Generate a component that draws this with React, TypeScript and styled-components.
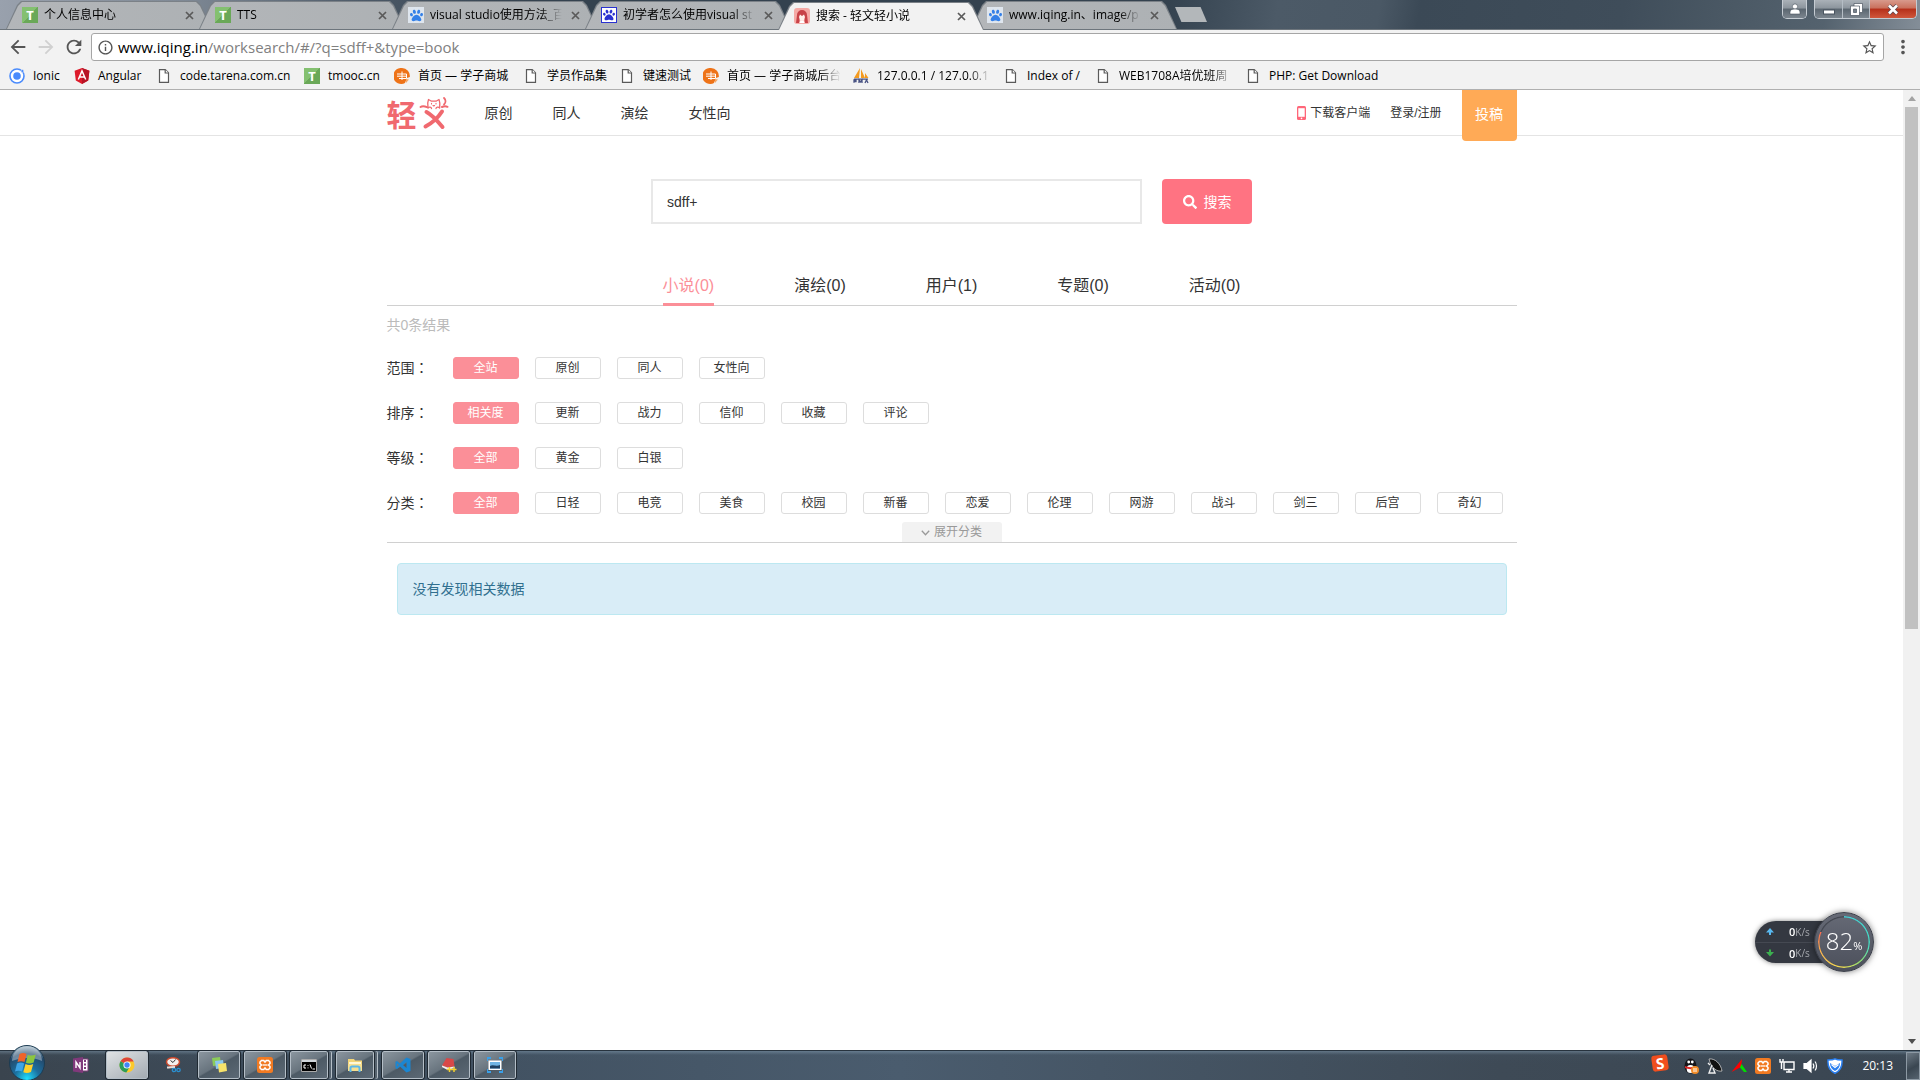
import React, { useState } from "react";
import styled, { createGlobalStyle, css } from "styled-components";
import { MdArrowBack, MdArrowForward, MdRefresh, MdStarBorder, MdInfoOutline, MdMoreVert } from "react-icons/md";
import { FaPaw, FaSearch } from "react-icons/fa";

const uiFont = `"Open Sans", "Noto Sans CJK SC", sans-serif`;
const pageFont = `"Liberation Sans", "Noto Sans CJK SC", sans-serif`;

const GlobalStyle = createGlobalStyle`
  *, *::before, *::after { box-sizing: border-box; }
  body { margin: 0; overflow: hidden; }
  button, input { font: inherit; color: inherit; margin: 0; }
  button { padding: 0; border: 0; background: none; cursor: pointer; }
  a { color: inherit; text-decoration: none; }
  svg { display: block; flex: none; }
`;

const Desktop = styled.div`
  display: flex;
  flex-direction: column;
  height: 100vh;
  background: #fff;
  font-family: ${uiFont};
  font-size: 12px;
  color: #000;
`;

/* ---------- browser tab strip ---------- */

const TabStrip = styled.header`
  display: flex;
  justify-content: space-between;
  height: 30px;
  padding: 0 3px 0 6px;
  background: linear-gradient(100deg, #99a1ad 0, #7f8995 180px, #4c5967 360px, #34424f 520px, #34424f 1150px,
    #4c5a67 1260px, #4a5865 1360px, #3b4956 1400px, #3f4d5a 1600px, #4a5864 1700px, #54626e 1800px, #86909a 1900px);
  border-bottom: 1px solid #6d757c;
`;

const Tabs = styled.nav`
  display: flex;
  align-items: flex-end;
`;

const TabBox = styled.div<{ $active?: boolean }>`
  position: relative;
  z-index: ${(p) => (p.$active ? 2 : 1)};
  display: flex;
  align-items: center;
  gap: 6px;
  width: 206px;
  height: 28px;
  margin-right: -13px;
  margin-bottom: ${(p) => (p.$active ? "-1px" : "0")};
  padding: 0 16px;
  isolation: isolate;

  &::before,
  &::after {
    content: "";
    position: absolute;
    z-index: -1;
    inset: 0;
    clip-path: polygon(0 100%, 11px 4px, 15px 0, 191px 0, 195px 4px, 100% 100%);
    background: #7b8187;
  }
  &::after {
    inset: 1px 1px 0;
    clip-path: polygon(0 100%, 11px 4px, 15px 0, 189px 0, 193px 4px, 100% 100%);
    background: ${(p) => (p.$active ? "#f2f2f2" : "linear-gradient(90deg, #b3b6b9, #adb1b4)")};
  }
`;

const fade = css`
  overflow: hidden;
  white-space: nowrap;
  mask-image: linear-gradient(90deg, #000 calc(100% - 22px), transparent);
`;

const TabTitle = styled.a`
  ${fade}
  flex: 1;
  line-height: 20px;
`;

const TabClose = styled.button`
  display: grid;
  place-items: center;
  width: 14px;
  height: 14px;
  color: #5a5a5a;
`;

const NewTab = styled.button`
  align-self: flex-start;
  margin: 7px 0 0 11px;
  width: 32px;
  height: 15px;
  background: #b3b7ba;
  clip-path: polygon(0 0, 80% 0, 100% 100%, 20% 100%);
`;

const WindowControls = styled.div`
  display: flex;
  gap: 7px;
  height: 19px;
`;

const ControlGroup = styled.div`
  display: flex;
  border: 1px solid #c5ccd3;
  border-top: 0;
  border-radius: 0 0 5px 5px;
  overflow: hidden;
`;

const ControlButton = styled.button<{ $width: number; $close?: boolean }>`
  display: grid;
  place-items: center;
  width: ${(p) => p.$width}px;
  color: #fff;
  border-right: 1px solid #b5bdc5;
  background: ${(p) =>
    p.$close
      ? "linear-gradient(#d89a8c 0, #c9705c 45%, #b5301a 50%, #d0573c 100%)"
      : "linear-gradient(#aab1b8 0, #8c959d 45%, #5b6670 50%, #7c868f 100%)"};
  &:last-child { border-right: 0; }
`;

/* ---------- toolbar & bookmarks ---------- */

const Toolbar = styled.div`
  display: flex;
  align-items: center;
  height: 34px;
  padding: 0 6px 0 7px;
  background: #f2f2f2;
  color: #555;
`;

const ToolButton = styled.button<{ $dim?: boolean }>`
  display: grid;
  place-items: center;
  width: 22px;
  height: 22px;
  margin-right: 6px;
  color: ${(p) => (p.$dim ? "#d0d0d0" : "#555")};
`;

const AddressBar = styled.form`
  display: flex;
  align-items: center;
  flex: 1;
  height: 28px;
  padding: 0 5px;
  border: 1px solid #a6a6a6;
  border-radius: 3px;
  background: #fff;
  font-size: 15px;
  line-height: 20px;
`;

const Host = styled.label`
  margin-left: 4px;
  color: #000;
`;

const UrlPath = styled.input`
  flex: 1;
  min-width: 0;
  padding: 0;
  border: 0;
  outline: 0;
  background: none;
  color: #808080;
`;

const MenuButton = styled.button`
  display: grid;
  place-items: center;
  width: 22px;
  margin-left: 8px;
`;

const BookmarkBar = styled.nav`
  display: flex;
  align-items: center;
  gap: 12px;
  height: 26px;
  padding: 0 9px 2px;
  background: #f2f2f2;
  border-bottom: 1px solid #b0b0b0;
`;

const Bookmark = styled.a`
  display: flex;
  align-items: center;
  gap: 8px;
`;

const BookmarkText = styled.span<{ $width: number; $clipped?: boolean }>`
  width: ${(p) => p.$width}px;
  line-height: 20px;
  white-space: nowrap;
  ${(p) => p.$clipped && fade}
`;

const LetterIcon = styled.span`
  display: grid;
  place-items: center;
  flex: none;
  width: 16px;
  height: 16px;
  background: linear-gradient(135deg, #84c070 50%, #6aa858 50%);
  color: #fff;
  font: 700 13px/16px "Open Sans", sans-serif;
`;

const PawIcon = styled.span<{ $solid?: boolean }>`
  display: grid;
  place-items: center;
  flex: none;
  width: 16px;
  height: 16px;
  background: ${(p) => (p.$solid ? "#fff" : "#dfe6ee")};
  border: ${(p) => (p.$solid ? "1px solid #2a32d0" : "0")};
  color: ${(p) => (p.$solid ? "#2a32d0" : "#3480e8")};
`;

/* ---------- page ---------- */

const Viewport = styled.div`
  display: flex;
  flex: 1;
  min-height: 0;
`;

const Page = styled.div`
  flex: 1;
  min-width: 0;
  font-family: ${pageFont};
  font-size: 14px;
  line-height: 20px;
  color: #333;
`;

const Container = styled.div`
  width: 100%;
  max-width: 1130px;
  margin: 0 auto;
`;

const SiteHeader = styled.header`
  height: 46px;
  border-bottom: 1px solid #e4e4e4;
`;

const HeaderRow = styled(Container)`
  display: flex;
  align-items: flex-start;
`;

const LogoLink = styled.a`
  display: flex;
  align-items: center;
  gap: 2px;
  width: 62px;
  height: 46px;
  margin-right: 36px;
  color: #f0696f;
  font: 700 30px/44px "Noto Sans CJK SC", sans-serif;
`;

const SiteNav = styled.nav`
  display: flex;
  flex: 1;
  gap: 40px;
  line-height: 46px;
`;

const UserLinks = styled.div`
  display: flex;
  align-items: flex-start;
  gap: 20px;
  font-size: 12px;
  line-height: 46px;
`;

const DownloadLink = styled.a`
  display: flex;
  align-items: center;
  gap: 4px;
`;

const PostButton = styled.button`
  width: 55px;
  height: 51px;
  padding-bottom: 4px;
  border-radius: 0 0 4px 4px;
  background: #ffaa56;
  color: #fff;
  font-size: 14px;
`;

const SearchForm = styled.form`
  display: flex;
  justify-content: center;
  gap: 20px;
  padding-top: 43px;
`;

const SearchInput = styled.input`
  width: 491px;
  height: 45px;
  padding: 0 14px;
  border: 2px solid #e8e8e8;
  outline: 0;
  background: #fff;
`;

const SearchButton = styled.button`
  display: flex;
  align-items: center;
  justify-content: center;
  gap: 7px;
  width: 90px;
  height: 45px;
  border-radius: 4px;
  background: #ff7382;
  color: #fff;
`;

const ResultTabs = styled.nav`
  display: flex;
  justify-content: center;
  gap: 80px;
  margin-top: 42px;
  border-bottom: 1px solid #d0d0d0;
  font-size: 16px;
`;

const ResultTab = styled.button<{ $active: boolean }>`
  height: 40px;
  margin-bottom: -1px;
  padding-top: 3px;
  line-height: 34px;
  border-bottom: 3px solid ${(p) => (p.$active ? "#fb8f98" : "transparent")};
  color: ${(p) => (p.$active ? "#fb8f98" : "#333")};
`;

const ResultCount = styled.p`
  margin: 9px 0 0;
  color: #bbb;
`;

const Filters = styled.section`
  position: relative;
  display: flex;
  flex-direction: column;
  gap: 23px;
  margin-top: 22px;
  padding-bottom: 28px;
  border-bottom: 1px solid #d0d0d0;
`;

const FilterRow = styled.div`
  display: flex;
  align-items: flex-start;
`;

const FilterLabel = styled.span`
  width: 66px;
`;

/* the Traditional face centres the full-width colon in its cell */
const Colon = styled.span`
  font-family: "Noto Sans CJK TC", sans-serif;
`;

const FilterOptions = styled.div`
  display: flex;
  flex: 1;
  flex-wrap: wrap;
  gap: 16px;
`;

const Pill = styled.button<{ $active: boolean }>`
  width: 66px;
  height: 22px;
  padding-top: 1px;
  border: 1px solid ${(p) => (p.$active ? "#fb8f98" : "#ddd")};
  border-radius: 3px;
  background: ${(p) => (p.$active ? "#fb8f98" : "#fff")};
  color: ${(p) => (p.$active ? "#fff" : "#333")};
  font-size: 12px;
  line-height: 19px;
`;

const ExpandRow = styled.div`
  position: absolute;
  right: 0;
  bottom: 0;
  left: 0;
  display: flex;
  justify-content: center;
`;

const ExpandButton = styled.button`
  display: flex;
  align-items: center;
  justify-content: center;
  gap: 4px;
  width: 100px;
  height: 20px;
  padding-top: 1px;
  border-radius: 3px 3px 0 0;
  background: #f2f2f2;
  color: #999;
  font-size: 12px;
  line-height: 19px;
`;

const Notice = styled.p`
  margin: 20px 10px 0;
  padding: 15px;
  border: 1px solid #bce8f1;
  border-radius: 4px;
  background: #d9edf7;
  color: #31708f;
`;

const ScrollBar = styled.div`
  display: flex;
  flex-direction: column;
  align-items: center;
  width: 17px;
  background: #f1f1f1;
`;

const ScrollArrow = styled.button<{ $dim?: boolean }>`
  display: grid;
  place-items: center;
  width: 17px;
  height: 17px;
  color: ${(p) => (p.$dim ? "#a3a3a3" : "#505050")};
`;

const ScrollThumb = styled.div`
  flex: 522;
  width: 13px;
  background: #c1c1c1;
`;

const ScrollRest = styled.div`
  flex: 404;
`;

/* ---------- network speed widget ---------- */

const Widget = styled.aside`
  position: fixed;
  right: 46px;
  bottom: 108px;
  display: flex;
  align-items: center;
  color: #fff;
`;

const Speeds = styled.div`
  width: 74px;
  height: 42px;
  margin-right: -15px;
  border-radius: 21px 0 0 21px;
  background: #343841;
  box-shadow: 0 0 5px rgba(0, 0, 0, 0.5);
`;

const Speed = styled.div`
  display: flex;
  align-items: center;
  height: 21px;
  padding-left: 11px;
  font-size: 10px;
  color: #a5a8ae;
  & + & { border-top: 1px solid #454952; }
`;

const SpeedValue = styled.b`
  margin-left: 15px;
  font-size: 11px;
  font-weight: 600;
  color: #fff;
`;

const Gauge = styled.div`
  position: relative;
  display: flex;
  align-items: baseline;
  justify-content: center;
  width: 60px;
  height: 60px;
  border: 1px solid #3c404a;
  border-radius: 50%;
  background: linear-gradient(#666a76, #4c505b);
  box-shadow: 0 0 6px rgba(0, 0, 0, 0.5);
  font: 300 24px/56px "Open Sans", sans-serif;

  &::before {
    content: "";
    position: absolute;
    inset: 3px;
    border-radius: 50%;
    background: conic-gradient(#3fd0d8 0, #48dcc0 100deg, #8fdc70 140deg, #f0dc50 185deg, #f8b050 250deg, #f86a50 293deg, #444852 293deg);
    mask: radial-gradient(closest-side, transparent calc(100% - 2px), #000 calc(100% - 1px));
  }
`;

const Percent = styled.span`
  font-size: 11px;
  font-weight: 400;
`;

/* ---------- taskbar ---------- */

const Taskbar = styled.footer`
  display: flex;
  align-items: stretch;
  height: 30px;
  border-top: 1px solid #27333e;
  background: linear-gradient(rgba(130, 155, 175, 0.5), rgba(70, 90, 105, 0.15) 4px, transparent 12px),
    linear-gradient(90deg, #3a444e, #3e4d5c 300px, #4a5c6e 900px, #3e4a56 1500px, #3a4652);
`;

const StartButton = styled.button`
  width: 36px;
  height: 36px;
  margin: -6px 15px 0 9px;
`;

const TaskButton = styled.button<{ $state?: "open" | "active" | "stacked" }>`
  display: grid;
  place-items: center;
  width: ${(p) => (p.$state === "stacked" ? 38 : 42)}px;
  height: 28px;
  margin: 0 ${(p) => (p.$state === "stacked" ? 8 : 4)}px 0 0;
  border-radius: 2px;
  ${(p) =>
    p.$state &&
    css`
      border: 1px solid #b4bec7;
      outline: 1px solid #1f2932;
      background: ${p.$state === "active"
        ? "linear-gradient(150deg, #dfe2e4, #a3abb2)"
        : "linear-gradient(150deg, #8b969f 0, #68747e 48%, #4d5a65 52%, #5c6975)"};
      box-shadow: ${p.$state === "stacked" ? "3px 0 0 #56636f, 4px 0 0 #b4bec7" : "none"};
    `}
`;

const Tray = styled.div`
  display: flex;
  align-items: center;
  gap: 8px;
  margin-left: auto;
`;

const SogouMark = styled.span`
  width: 16px;
  height: 16px;
  margin: 0 7px 5px 0;
  border-radius: 3px;
  background: #f04e1e;
  color: #fff;
  font: 700 15px/16px "Open Sans", sans-serif;
  text-align: center;
  rotate: -8deg;
`;

const Clock = styled.time`
  margin: 0 5px 0 11px;
  color: #fff;
  font-size: 12px;
`;

const ShowDesktop = styled.button`
  width: 14px;
  height: 28px;
  border: 1px solid #8d99a4;
  background: linear-gradient(150deg, #6e7a85, #3a4651 55%, #56636f);
`;

/* ---------- drawings ---------- */

const FileIcon = () => (
  <svg width="16" height="16" viewBox="0 0 16 16" fill="#fff" stroke="#5a5a5a" strokeWidth="1.2">
    <path d="M3.5 1.6h5.8l3.2 3.2v9.6h-9z" />
    <path d="M9.2 1.6v3.4h3.3" />
  </svg>
);
const IonicIcon = () => (
  <svg width="16" height="16" viewBox="0 0 16 16">
    <circle cx="8" cy="8" r="7" fill="#fff" stroke="#4a8bfc" strokeWidth="1.6" />
    <circle cx="8" cy="8" r="3.8" fill="#4a8bfc" />
    <circle cx="13.4" cy="3" r="1.5" fill="#4a8bfc" stroke="#f2f2f2" strokeWidth=".6" />
  </svg>
);
const AngularIcon = () => (
  <svg width="16" height="16" viewBox="0 0 16 16">
    <path d="M8 0l7.4 2.7-1.2 9.8L8 16l-6.200-3.500L.6 2.700z" fill="#dd1b2b" />
    <path d="M8 0l7.400 2.700-1.200 9.800L8 16z" fill="#b81426" />
    <path d="M4.300 11.500L8 3l3.700 8.500M5.800 9h4.400" fill="none" stroke="#fff" strokeWidth="1.500" />
  </svg>
);
const MallIcon = () => (
  <svg width="16" height="16" viewBox="0 0 16 16">
    <path d="M8 0a8 8 0 017.800 9L13 10l-2 5A8 8 0 118 0z" fill="#ee7318" />
    <path d="M3 6h9.500v4.500H5M8 3.500v8.500M3 8.200h9" fill="none" stroke="#fff" strokeWidth="1" />
    <path d="M12 11l3 .5-3 3.500z" fill="#f4a868" />
  </svg>
);
const PmaIcon = () => (
  <svg width="16" height="16" viewBox="0 0 16 16">
    <path d="M7 0L1 10h5zM8 1v9h4zM12 5v5h3.500z" fill="#f49b20" />
    <path d="M1 11.200h14M1 14.800V12h2v1.500H1M6 15v-3l1.500 2L9 12v3M12 15l1.500-3 1.500 3" fill="none" stroke="#4a5484" strokeWidth="1.300" />
  </svg>
);
const GirlIcon = () => (
  <svg width="16" height="16" viewBox="0 0 16 16">
    <rect width="16" height="16" rx="3" fill="#f5aaa6" />
    <path d="M2 15l1-8a5 5 0 0110 0l1 8h-3l-1-5H6l-1 5z" fill="#c84248" />
    <path d="M5 9l1-2.500L8 8l2-1.500L11 9l-1 3.500H6z" fill="#fff0ea" />
    <path d="M5.500 15l1-2.500h3l1 2.500z" fill="#fff" />
  </svg>
);
const CrossIcon = () => (
  <svg width="9" height="9" viewBox="0 0 9 9" stroke="currentColor" strokeWidth="1.700">
    <path d="M1 1l7 7M8 1L1 8" />
  </svg>
);
const CatMark = () => (
  <svg width="31" height="34" viewBox="0 0 31 34" fill="none" stroke="#f0696f" strokeLinecap="round" strokeLinejoin="round">
    <path d="M1.500 11c2-1.500 4-1 6.500.2M23 11c2-1 4-1 5.500-.2" strokeWidth="2" />
    <path d="M9 11C8.500 8 8.700 5.500 9.500 3.500l3 1.700h4.500l3-1.700c.9 2.500 1.200 5 .7 7.500" strokeWidth="1.300" />
    <path d="M12.500 7.200v.8M17 7.200v.8M14 9.500l.8.500.8-.5" strokeWidth="1.100" />
    <path d="M9 12c1.200-1.500 3.500-1 3.500.600M17 12.600c0-1.600 2.500-2.100 3.700-.6" strokeWidth="1.300" />
    <path d="M25 8.500c2-2 2-4.500 0-6.500" strokeWidth="1.800" />
    <path d="M7.500 16c4 2 11 9 16 15M23 15.500C19.500 21 13 27 6.500 30.500" strokeWidth="4" />
  </svg>
);
const PhoneIcon = () => (
  <svg width="9" height="14" viewBox="0 0 9 14">
    <rect width="9" height="14" rx="1.500" fill="#ff6679" />
    <path d="M1.300 2.200h6.400v8.600H1.300z" fill="#fff" />
    <circle cx="4.500" cy="12.400" r=".8" fill="#fff" />
  </svg>
);
const ChevronIcon = () => (
  <svg width="9" height="6" viewBox="0 0 9 6" fill="none" stroke="currentColor" strokeWidth="1.300">
    <path d="M.8.800l3.700 4 3.700-4" />
  </svg>
);
const Triangle = ({ up }: { up?: boolean }) => (
  <svg width="8" height="5" viewBox="0 0 8 5" fill="currentColor">
    <path d={up ? "M4 0l4 5H0z" : "M4 5l4-5H0z"} />
  </svg>
);
const SpeedArrow = ({ up }: { up?: boolean }) => (
  <svg width="8" height="8" viewBox="0 0 8 8" fill={up ? "#58b8f0" : "#3cb050"}>
    <path d={up ? "M4 0l4 4.500H5V7H3V4.500H0z" : "M4 7.500L0 3h3V.5h2V3h3z"} />
  </svg>
);
const UserIcon = () => (
  <svg width="12" height="12" viewBox="0 0 12 12" fill="#fff" stroke="#4a5560" strokeWidth=".6">
    <circle cx="6" cy="3.500" r="2.600" />
    <path d="M1 11V9c0-2 2-3 5-3s5 1 5 3v2z" />
  </svg>
);
const MinIcon = () => (
  <svg width="12" height="12" viewBox="0 0 12 12">
    <rect x=".5" y="7" width="11" height="4" fill="#fff" stroke="#4a5560" />
  </svg>
);
const RestoreIcon = () => (
  <svg width="13" height="13" viewBox="0 0 13 13" stroke="#4a5560" strokeWidth=".7">
    <path d="M4 .5h8.500v9H4z" fill="#fff" />
    <path d="M.5 3h9v9.500h-9z" fill="#fff" />
    <path d="M3.500 6h3v3.500h-3z" fill="#77818b" />
  </svg>
);
const CloseIcon = () => (
  <svg width="12" height="11" viewBox="0 0 12 11" fill="none">
    <path d="M2 1.500l8 8M10 1.500l-8 8" stroke="#5a4650" strokeWidth="4" />
    <path d="M2 1.500l8 8M10 1.500l-8 8" stroke="#fff" strokeWidth="2.600" />
  </svg>
);
const StartOrb = () => (
  <svg width="36" height="36" viewBox="0 0 36 36">
    <defs>
      <radialGradient id="orb" cx=".5" cy=".95" r=".9">
        <stop offset="0" stopColor="#1fe0ff" />
        <stop offset=".4" stopColor="#1c6f9f" />
        <stop offset=".8" stopColor="#24486a" />
        <stop offset="1" stopColor="#8fa9ba" />
      </radialGradient>
    </defs>
    <circle cx="18" cy="18" r="17.500" fill="url(#orb)" stroke="#1d3c52" />
    <path d="M3 16a15 15 0 0130 0c-8-4-20-4-30 0z" fill="#fff" opacity=".35" />
    <path d="M10.500 9c3-1.500 5-1 7 0l-2 8c-2-1-4.500-1.200-7 0z" fill="#f0642a" />
    <path d="M18.800 9.700c2.500 1.200 5 1.200 8-.2l-2.200 8c-3 1.400-5.500 1.200-7.700.2z" fill="#8cc63f" />
    <path d="M8 18.500c2.500-1.200 5-1.200 7.200 0l-2.200 8c-2-1-4.500-1.200-7 0z" fill="#3ea4e6" />
    <path d="M16.500 19c2.500 1.200 5 1.200 7.700 0L22 27c-3 1.400-5.500 1.200-7.700.2z" fill="#ffd02a" />
  </svg>
);
const OneNoteIcon = () => (
  <svg width="16" height="16" viewBox="0 0 16 16">
    <path d="M9 2h6v12H9z" fill="#fff" stroke="#80397b" />
    <path d="M12 3v2M12 6.500v2M12 10v2" stroke="#80397b" strokeWidth="2" />
    <path d="M0 1.500L10 0v16L0 14.500z" fill="#80397b" />
    <path d="M3 11V5l4 6V5" fill="none" stroke="#fff" strokeWidth="1.400" />
  </svg>
);
const ChromeIcon = () => (
  <svg width="16" height="16" viewBox="0 0 16 16">
    <circle cx="8" cy="8" r="7.500" fill="#fbc92c" />
    <path d="M8 8L1.500 4.200A7.500 7.500 0 0114.700 4.500H8z" fill="#dc4437" />
    <path d="M8 8l-6.500-3.800A7.500 7.500 0 007.300 15.500L11 9.500z" fill="#2a9d58" />
    <circle cx="8" cy="8" r="3.600" fill="#fff" />
    <circle cx="8" cy="8" r="2.700" fill="#4285f4" />
  </svg>
);
const SnipIcon = () => (
  <svg width="16" height="16" viewBox="0 0 16 16" fill="none">
    <ellipse cx="8" cy="5" rx="6.500" ry="4.300" fill="#f4f0ee" stroke="#c9482c" strokeWidth="1.500" />
    <path d="M8 5.500l2.500-3M5.500 3.500l2.500 2" stroke="#333" />
    <path d="M2 10.500c3 0 4.500-.5 8-.5" stroke="#e6dcd8" strokeWidth="2" />
    <circle cx="9" cy="13" r="1.700" stroke="#2a8fd0" strokeWidth="1.300" />
    <circle cx="13.500" cy="13" r="1.700" stroke="#2a8fd0" strokeWidth="1.300" />
  </svg>
);
const NotesIcon = () => (
  <svg width="16" height="16" viewBox="0 0 16 16">
    <path d="M1 1l8-1 1 8-8 1z" fill="#8ccb5a" />
    <path d="M4 4l8-1 1 8-8 1z" fill="#8cc8ee" />
    <path d="M7 7l8-1 1 8-8 1.500z" fill="#f6e26a" />
  </svg>
);
const XamppIcon = () => (
  <svg width="16" height="16" viewBox="0 0 16 16">
    <rect width="16" height="16" rx="2.500" fill="#f17a22" />
    <path d="M4.500 3.500h2.200L8 5l1.300-1.500h2.200L13 5v1.500L11.500 8 13 9.500V11l-1.500 1.500H9.300L8 11l-1.300 1.500H4.500L3 11V9.500L4.500 8 3 6.500V5z" fill="none" stroke="#fff" strokeWidth="1.500" />
    <path d="M5.500 8h5" stroke="#fff" strokeWidth="1.300" />
  </svg>
);
const ConsoleIcon = () => (
  <svg width="16" height="13" viewBox="0 0 16 13">
    <path d="M.5.500h15v12H.5z" fill="#000" stroke="#aaa" />
    <path d="M1 1h14v2H1z" fill="#cfd5da" />
    <path d="M5 6H3v3h2M7 6v.8M7 8.500v.8M9 5.500l1.500 4M11.500 10H14" fill="none" stroke="#fff" />
  </svg>
);
const FolderIcon = () => (
  <svg width="16" height="16" viewBox="0 0 16 16">
    <path d="M1 2h6l1 1.500h7V14H1z" fill="#f3d578" />
    <path d="M2 5h12v3H2z" fill="#fff7d6" />
    <path d="M1 7h14v7H1z" fill="#f7df90" />
    <path d="M3.500 15v-4a1.500 1.500 0 011.500-1.500h6a1.500 1.500 0 011.500 1.500v4" fill="none" stroke="#5cb8e8" strokeWidth="2" />
  </svg>
);
const CodeIcon = () => (
  <svg width="16" height="16" viewBox="0 0 16 16">
    <path d="M11.500.500L15.500 2v12l-4 1.500L5 9.500 2 12 .5 11.200V4.800L2 4l3 2.500zM11.500 5L8 8l3.500 3zM2 6.200v3.600L3.800 8z" fill="#1a86d2" fillRule="evenodd" />
  </svg>
);
const BookIcon = () => (
  <svg width="16" height="16" viewBox="0 0 16 16">
    <path d="M5.500 1l7 1 1 7.500-7 1-5.500-2z" fill="#d84848" />
    <path d="M1 8.500l5.500 2 7-1V11L6.500 13 1 10z" fill="#f4ecec" />
    <path d="M8.500 10v5M6 12.500h5M13 10v5M10.500 12.500h5" stroke="#f2d030" strokeWidth="1.500" />
  </svg>
);
const PictureIcon = () => (
  <svg width="16" height="16" viewBox="0 0 16 16">
    <path d="M0 4V1h4M12 1h4v3M16 12v3h-4M4 15H0v-3" fill="none" stroke="#3aa0e8" strokeWidth="2" />
    <path d="M1.500 3.500h13v9.500h-13z" fill="#fff" />
    <path d="M3 5h10v6.500H3z" fill="#6fb4e4" />
    <path d="M3 9c3-2 6 1 10-1v3.500H3z" fill="#1d3f60" />
  </svg>
);
const PenguinIcon = () => (
  <svg width="16" height="16" viewBox="0 0 16 16">
    <ellipse cx="7.500" cy="8" rx="6" ry="7.500" fill="#16161a" />
    <ellipse cx="7.500" cy="11" rx="3.800" ry="4" fill="#fff" />
    <circle cx="5.700" cy="4" r="1.400" fill="#fff" />
    <circle cx="9.300" cy="4" r="1.400" fill="#fff" />
    <path d="M2 8c3 1.500 8 1.500 11 0v2c-3 1.500-8 1.500-11 0z" fill="#e02828" />
    <circle cx="12" cy="12" r="4" fill="#f28c28" />
    <path d="M10 11h4M10 13h4" stroke="#fff" />
  </svg>
);
const DishIcon = () => (
  <svg width="16" height="16" viewBox="0 0 16 16">
    <path d="M2 1c6-1 12 5 13 12-5 1-11-3-13-12z" fill="#111" stroke="#ccc" strokeWidth=".8" />
    <path d="M5 7l-3 8h6l-2-5M1 5l2 2" fill="none" stroke="#eee" strokeWidth="1.400" />
  </svg>
);
const PeakIcon = () => (
  <svg width="16" height="16" viewBox="0 0 16 16">
    <path d="M11 1l-1 8-9.500 5z" fill="#f00" />
    <path d="M10.500 6l5.500 8h-3L9 9.500z" fill="#0d0" />
  </svg>
);
const NetworkIcon = () => (
  <svg width="16" height="16" viewBox="0 0 16 16" fill="none" stroke="#fff" strokeWidth="1.400">
    <path d="M5 4h10v7.500H5zM7 14h6M10 11.500V14" />
    <path d="M1 1v3h3V1M2.500 4v7" />
  </svg>
);
const SpeakerIcon = () => (
  <svg width="16" height="16" viewBox="0 0 16 16" fill="none" stroke="#fff" strokeWidth="1.200">
    <path d="M1 5.500h3L8 2v12l-4-3.500H1z" fill="#fff" />
    <path d="M10 5.500c1 1.500 1 3.500 0 5M12 3.500c2 2.500 2 6.500 0 9" />
  </svg>
);
const ShieldIcon = () => (
  <svg width="16" height="16" viewBox="0 0 16 16">
    <path d="M8 .8C10 2 13 2 15 2c.5 6-1 10.500-7 13.200C2 12.500.500 8 1 2c2 0 5 0 7-1.200z" fill="#fff" stroke="#2a7ff0" strokeWidth="1.500" />
    <path d="M3 5l5 3 5-3c0 4-2 6.500-5 8-3-1.500-5-4-5-8z" fill="#2a7ff0" />
    <path d="M4.500 6.500L8 9.500l3.500-3" fill="none" stroke="#fff" strokeWidth="1.300" />
  </svg>
);

/* ---------- data ---------- */

const browserTabs = [
  { title: "个人信息中心", icon: <LetterIcon>T</LetterIcon> },
  { title: "TTS", icon: <LetterIcon>T</LetterIcon> },
  { title: "visual studio使用方法_百", icon: <PawIcon><FaPaw size={13} /></PawIcon> },
  { title: "初学者怎么使用visual st", icon: <PawIcon $solid><FaPaw size={12} /></PawIcon> },
  { title: "搜索 - 轻文轻小说", icon: <GirlIcon />, active: true },
  { title: "www.iqing.in、image/p", icon: <PawIcon><FaPaw size={13} /></PawIcon> },
];

const bookmarks = [
  { text: "Ionic", width: 29, icon: <IonicIcon /> },
  { text: "Angular", width: 46, icon: <AngularIcon /> },
  { text: "code.tarena.com.cn", width: 112, icon: <FileIcon /> },
  { text: "tmooc.cn", width: 54, icon: <LetterIcon>T</LetterIcon> },
  { text: "首页 — 学子商城", width: 93, icon: <MallIcon /> },
  { text: "学员作品集", width: 60, icon: <FileIcon /> },
  { text: "键速测试", width: 48, icon: <FileIcon /> },
  { text: "首页 — 学子商城后台", width: 114, icon: <MallIcon />, clipped: true },
  { text: "127.0.0.1 / 127.0.0.1", width: 114, icon: <PmaIcon />, clipped: true },
  { text: "Index of /", width: 56, icon: <FileIcon /> },
  { text: "WEB1708A培优班周", width: 114, icon: <FileIcon />, clipped: true },
  { text: "PHP: Get Download", width: 114, icon: <FileIcon /> },
];

const resultTabs = ["小说(0)", "演绘(0)", "用户(1)", "专题(0)", "活动(0)"];

const filterRows = [
  { label: "范围", options: ["全站", "原创", "同人", "女性向"] },
  { label: "排序", options: ["相关度", "更新", "战力", "信仰", "收藏", "评论"] },
  { label: "等级", options: ["全部", "黄金", "白银"] },
  {
    label: "分类",
    options: ["全部", "日轻", "电竞", "美食", "校园", "新番", "恋爱", "伦理", "网游", "战斗", "剑三", "后宫", "奇幻"],
  },
];

const tasks: { name: string; icon: React.ReactNode; state?: "open" | "active" | "stacked" }[] = [
  { name: "OneNote", icon: <OneNoteIcon /> },
  { name: "Chrome", icon: <ChromeIcon />, state: "active" },
  { name: "Snipping Tool", icon: <SnipIcon /> },
  { name: "Sticky Notes", icon: <NotesIcon />, state: "open" },
  { name: "XAMPP", icon: <XamppIcon />, state: "open" },
  { name: "Command Prompt", icon: <ConsoleIcon />, state: "stacked" },
  { name: "Explorer", icon: <FolderIcon />, state: "stacked" },
  { name: "Code", icon: <CodeIcon />, state: "open" },
  { name: "Dictionary", icon: <BookIcon />, state: "open" },
  { name: "Pictures", icon: <PictureIcon />, state: "open" },
];

function Filter({ label, options }: { label: string; options: string[] }) {
  const [selected, setSelected] = useState(options[0]);
  return (
    <FilterRow role="group" aria-label={label}>
      <FilterLabel>{label}<Colon>：</Colon></FilterLabel>
      <FilterOptions>
        {options.map((o) => (
          <Pill key={o} type="button" $active={o === selected} onClick={() => setSelected(o)}>
            {o}
          </Pill>
        ))}
      </FilterOptions>
    </FilterRow>
  );
}

function Browser() {
  return (
    <>
      <TabStrip>
        <Tabs>
          {browserTabs.map((t) => (
            <TabBox key={t.title} $active={t.active}>
              {t.icon}
              <TabTitle href="#">{t.title}</TabTitle>
              <TabClose aria-label="关闭标签页"><CrossIcon /></TabClose>
            </TabBox>
          ))}
          <NewTab aria-label="新标签页" />
        </Tabs>
        <WindowControls>
          <ControlGroup>
            <ControlButton $width={23} aria-label="用户"><UserIcon /></ControlButton>
          </ControlGroup>
          <ControlGroup>
            <ControlButton $width={28} aria-label="最小化"><MinIcon /></ControlButton>
            <ControlButton $width={27} aria-label="还原"><RestoreIcon /></ControlButton>
            <ControlButton $width={46} $close aria-label="关闭"><CloseIcon /></ControlButton>
          </ControlGroup>
        </WindowControls>
      </TabStrip>
      <Toolbar>
        <ToolButton aria-label="后退"><MdArrowBack size={22} /></ToolButton>
        <ToolButton aria-label="前进" $dim><MdArrowForward size={22} /></ToolButton>
        <ToolButton aria-label="刷新"><MdRefresh size={22} /></ToolButton>
        <AddressBar onSubmit={(e) => e.preventDefault()}>
          <MdInfoOutline size={17} />
          <Host htmlFor="url">www.iqing.in</Host>
          <UrlPath id="url" defaultValue="/worksearch/#/?q=sdff+&type=book" />
          <MdStarBorder size={17} />
        </AddressBar>
        <MenuButton aria-label="菜单"><MdMoreVert size={22} /></MenuButton>
      </Toolbar>
      <BookmarkBar>
        {bookmarks.map((b) => (
          <Bookmark key={b.text} href="#">
            {b.icon}
            <BookmarkText $width={b.width} $clipped={b.clipped}>{b.text}</BookmarkText>
          </Bookmark>
        ))}
      </BookmarkBar>
    </>
  );
}

export default function App() {
  const [tab, setTab] = useState(resultTabs[0]);
  return (
    <Desktop>
      <GlobalStyle />
      <Browser />
      <Viewport>
        <Page>
          <SiteHeader>
            <HeaderRow>
              <LogoLink href="#">轻<CatMark /></LogoLink>
              <SiteNav>
                <a href="#">原创</a>
                <a href="#">同人</a>
                <a href="#">演绘</a>
                <a href="#">女性向</a>
              </SiteNav>
              <UserLinks>
                <DownloadLink href="#"><PhoneIcon />下载客户端</DownloadLink>
                <a href="#">登录/注册</a>
                <PostButton>投稿</PostButton>
              </UserLinks>
            </HeaderRow>
          </SiteHeader>
          <Container as="main">
            <SearchForm onSubmit={(e) => e.preventDefault()}>
              <SearchInput aria-label="搜索" defaultValue="sdff+" />
              <SearchButton type="submit"><FaSearch size={14} />搜索</SearchButton>
            </SearchForm>
            <ResultTabs>
              {resultTabs.map((t) => (
                <ResultTab key={t} $active={t === tab} onClick={() => setTab(t)}>{t}</ResultTab>
              ))}
            </ResultTabs>
            <ResultCount>共0条结果</ResultCount>
            <Filters>
              {filterRows.map((r) => <Filter key={r.label} {...r} />)}
              <ExpandRow>
                <ExpandButton><ChevronIcon />展开分类</ExpandButton>
              </ExpandRow>
            </Filters>
            <Notice>没有发现相关数据</Notice>
          </Container>
        </Page>
        <ScrollBar>
          <ScrollArrow aria-label="向上滚动" $dim><Triangle up /></ScrollArrow>
          <ScrollThumb />
          <ScrollRest />
          <ScrollArrow aria-label="向下滚动"><Triangle /></ScrollArrow>
        </ScrollBar>
      </Viewport>
      <Widget>
        <Speeds>
          <Speed><SpeedArrow up /><SpeedValue>0</SpeedValue>K/s</Speed>
          <Speed><SpeedArrow /><SpeedValue>0</SpeedValue>K/s</Speed>
        </Speeds>
        <Gauge>82<Percent>%</Percent></Gauge>
      </Widget>
      <Taskbar>
        <StartButton aria-label="开始"><StartOrb /></StartButton>
        {tasks.map((t) => (
          <TaskButton key={t.name} aria-label={t.name} $state={t.state}>{t.icon}</TaskButton>
        ))}
        <Tray>
          <SogouMark>S</SogouMark>
          <PenguinIcon />
          <DishIcon />
          <PeakIcon />
          <XamppIcon />
          <NetworkIcon />
          <SpeakerIcon />
          <ShieldIcon />
          <Clock>20:13</Clock>
          <ShowDesktop aria-label="显示桌面" />
        </Tray>
      </Taskbar>
    </Desktop>
  );
}
